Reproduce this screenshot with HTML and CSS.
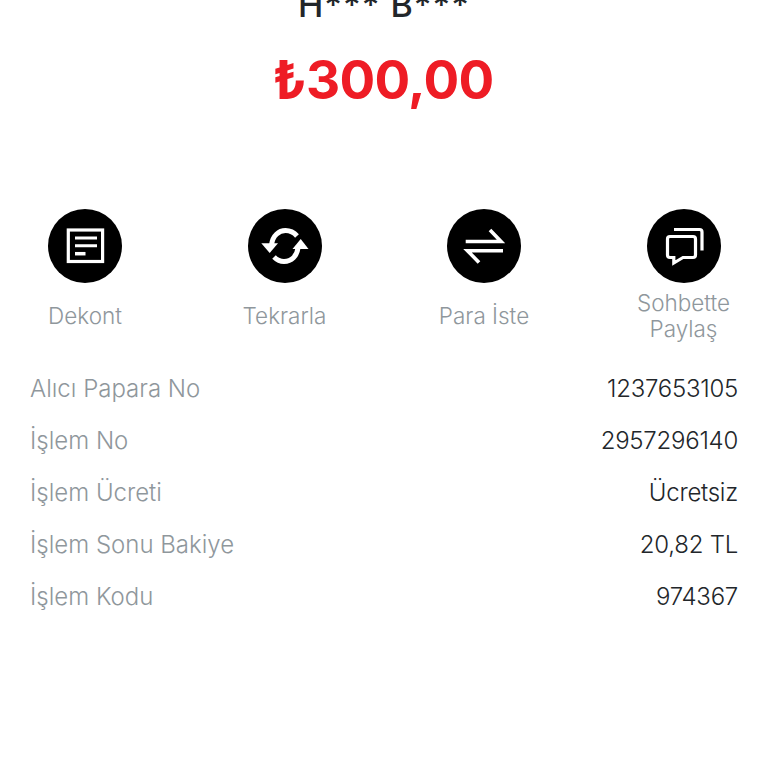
FILE: index.html
```html
<!DOCTYPE html>
<html lang="tr">
<head>
<meta charset="utf-8">
<title>Papara</title>
<link rel="stylesheet" href="styles.css">
</head>
<body>
<main class="screen">
  <h1 class="name">H*** B***</h1>
  <div class="amount">₺300,00</div>
  <section class="actions">
    <div class="action">
      <span class="circle">
        <svg viewBox="0 0 74 74" width="74" height="74" fill="none" stroke="#fff">
          <rect x="20.300" y="21" width="34.300" height="31.500" stroke-width="3.200"/>
          <path d="M27 29H49M27 36.700H49" stroke-width="3"/>
          <path d="M27 44.700H37.500" stroke-width="3.500"/>
        </svg>
      </span>
      <span class="label">Dekont</span>
    </div>
    <div class="action">
      <span class="circle">
        <svg viewBox="0 0 74 74" width="74" height="74" fill="none" stroke="#fff" stroke-width="5">
          <path d="M23.500 36C24.500 26.500 31 21.500 37.500 21.500C42.500 21.500 46 23.500 49 27"/>
          <path d="M50 39C49 47 43.500 52.500 36 52.500C32 52.500 29 51 26 48"/>
          <path d="M13.300 34.300H30L21.700 44Z" fill="#fff" stroke="none"/>
          <path d="M44.500 40H60.500L52.700 30Z" fill="#fff" stroke="none"/>
        </svg>
      </span>
      <span class="label">Tekrarla</span>
    </div>
    <div class="action">
      <span class="circle">
        <svg viewBox="0 0 74 74" width="74" height="74" fill="none" stroke="#fff" stroke-width="3.600">
          <path d="M18.700 32.500H54L43 21"/>
          <path d="M56 41.700H20.500L32 53.500"/>
        </svg>
      </span>
      <span class="label">Para İste</span>
    </div>
    <div class="action">
      <span class="circle">
        <svg viewBox="0 0 74 74" width="74" height="74" fill="none" stroke="#fff" stroke-width="3.200">
          <path d="M23 27.500H46C47.500 27.500 48.500 28.500 48.500 30V46C48.500 47.500 47.500 48.500 46 48.500H36L26.800 54V48.500H23C21.500 48.500 20.500 47.500 20.500 46V30C20.500 28.500 21.500 27.500 23 27.500Z"/>
          <path d="M27 20.500H52.500C54 20.500 55 21.500 55 23V41.500"/>
        </svg>
      </span>
      <span class="label">Sohbette Paylaş</span>
    </div>
  </section>
  <dl class="details">
    <div class="row"><dt>Alıcı Papara No</dt><dd>1237653105</dd></div>
    <div class="row"><dt>İşlem No</dt><dd>2957296140</dd></div>
    <div class="row"><dt>İşlem Ücreti</dt><dd>Ücretsiz</dd></div>
    <div class="row"><dt>İşlem Sonu Bakiye</dt><dd>20,82 TL</dd></div>
    <div class="row"><dt>İşlem Kodu</dt><dd>974367</dd></div>
  </dl>
</main>
</body>
</html>
```
FILE: styles.css
```css
html, body {
  margin: 0;
  padding: 0;
  background: #fff;
  overflow: hidden;
}
.screen {
  height: 768px;
  overflow: hidden;
  font-family: Inter, "Noto Sans", sans-serif;
}
.name {
  margin: -20px 0 0;
  height: 50px;
  line-height: 50px;
  font-size: 34px;
  font-weight: 500;
  text-align: center;
  color: #22262a;
  letter-spacing: 1px;
}
.amount {
  margin-top: 19px;
  height: 62px;
  line-height: 62px;
  font-size: 53px;
  font-weight: 700;
  text-align: center;
  color: #ee1c25;
  letter-spacing: -0.7px;
  padding-right: 2px;
}
.actions {
  display: flex;
  justify-content: space-between;
  margin-top: 98px;
  padding: 0 29.500px 0 30px;
}
.action {
  width: 110px;
  display: flex;
  flex-direction: column;
  align-items: center;
}
.circle {
  width: 74px;
  height: 74px;
  border-radius: 50%;
  background: #000;
  display: block;
}
.circle svg {
  display: block;
}
.label {
  margin-top: 7px;
  height: 52px;
  display: flex;
  align-items: center;
  text-align: center;
  font-size: 22.500px;
  line-height: 26px;
  font-weight: 300;
  color: #8f979c;
}
.details {
  margin: 20.500px 0 0;
  padding: 0 30px;
}
.row {
  display: flex;
  justify-content: space-between;
  align-items: center;
  height: 52px;
  font-size: 24px;
  font-weight: 300;
}
.row dt {
  color: #8f979c;
}
.row dd {
  margin: 0;
  color: #22262a;
  letter-spacing: -0.25px;
}
```
